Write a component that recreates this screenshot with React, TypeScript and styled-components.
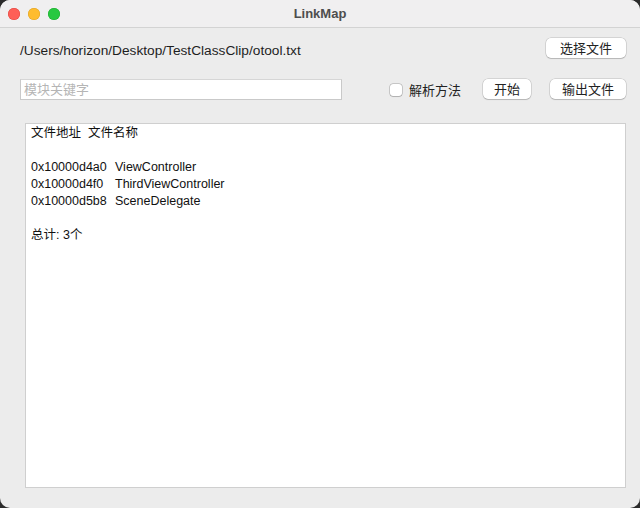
import React from "react";
import styled, { createGlobalStyle } from "styled-components";

const Global = createGlobalStyle`
  html, body { margin: 0; padding: 0; background: #2b2b2b; }
  body { font-family: "Liberation Sans", "Noto Sans CJK SC", sans-serif; }
  * { box-sizing: border-box; }
`;

const Window = styled.div`
  width: 640px;
  height: 508px;
  background: #ececec;
  border-radius: 10px;
  overflow: hidden;
  display: flex;
  flex-direction: column;
`;

const TitleBar = styled.div`
  height: 28px;
  flex: none;
  background: #f0eff0;
  border-bottom: 1px solid #d3d3d3;
  display: flex;
  align-items: center;
  position: relative;
  padding-left: 8px;
  gap: 8px;
`;

const Light = styled.span<{ $c: string; $b: string }>`
  width: 12px;
  height: 12px;
  border-radius: 50%;
  background: ${(p) => p.$c};
  box-shadow: inset 0 0 0 0.5px ${(p) => p.$b};
`;

const Title = styled.div`
  position: absolute;
  left: 0;
  right: 0;
  top: 0;
  bottom: 0;
  display: flex;
  align-items: center;
  justify-content: center;
  font-size: 13px;
  font-weight: bold;
  color: #4d4d4d;
  pointer-events: none;
`;

const Body = styled.div`
  flex: 1;
  display: flex;
  flex-direction: column;
  padding: 9px 14px 20px 20px;
`;

const Row = styled.div<{ $mt?: number }>`
  display: flex;
  align-items: center;
  margin-top: ${(p) => p.$mt ?? 0}px;
  & > * { flex: none; white-space: nowrap; }
`;

const PathText = styled.div`
  font-size: 13.7px;
  color: #1e1e1e;
  flex: 1 !important;
  padding-top: 6px;
`;

const Button = styled.button<{ $w: number; $ml?: string }>`
  width: ${(p) => p.$w}px;
  height: 20px;
  margin-left: ${(p) => p.$ml ?? "0"};
  border: none;
  border-radius: 5px;
  background: #fff;
  box-shadow: 0 0 0 0.5px rgba(0, 0, 0, 0.2), 0 1px 1px rgba(0, 0, 0, 0.14);
  font-family: "Liberation Sans", "Noto Sans CJK SC", sans-serif;
  font-size: 13px;
  color: #222;
  padding: 0;
  display: flex;
  align-items: center;
  justify-content: center;
`;

const Input = styled.input`
  width: 322px;
  height: 21px;
  border: 1px solid #c9c9c9;
  border-top-color: #d6d6d6;
  background: #fff;
  font-family: "Liberation Sans", "Noto Sans CJK SC", sans-serif;
  font-size: 13px;
  padding: 0 3px;
  outline: none;
  margin-top: 2px;
  &::placeholder { color: #b5b5b5; }
`;

const Check = styled.label`
  display: flex;
  align-items: center;
  gap: 7px;
  margin-left: 48px;
  font-size: 13px;
  color: #222;
  margin-top: 2px;
`;

const Box = styled.span`
  width: 12px;
  height: 12px;
  border-radius: 3px;
  background: #fff;
  box-shadow: 0 0 0 0.5px rgba(0, 0, 0, 0.3), 0 0.5px 1px rgba(0, 0, 0, 0.12);
`;

const Output = styled.div`
  margin-top: 23px;
  margin-left: 5px;
  flex: 1;
  background: #fff;
  border: 1px solid #cfcfcf;
  padding: 1px 5px 0;
  font-size: 12.5px;
  line-height: 17px;
  color: #111;
`;

const Header = styled.div`
  display: flex;
  gap: 7px;
  height: 17px;
`;

const Blank = styled.div`
  height: 17px;
`;

const Table = styled.div`
  display: grid;
  grid-template-columns: 84px auto;
  grid-auto-rows: 17px;
`;

const rows = [
  ["0x10000d4a0", "ViewController"],
  ["0x10000d4f0", "ThirdViewController"],
  ["0x10000d5b8", "SceneDelegate"],
];

export default function App() {
  return (
    <>
      <Global />
      <Window>
        <TitleBar>
          <Light $c="#fe5f57" $b="#e0443e" />
          <Light $c="#febc2e" $b="#dea123" />
          <Light $c="#28c840" $b="#1aab29" />
          <Title>LinkMap</Title>
        </TitleBar>
        <Body>
          <Row>
            <PathText>/Users/horizon/Desktop/TestClassClip/otool.txt</PathText>
            <Button $w={80}>选择文件</Button>
          </Row>
          <Row $mt={19}>
            <Input placeholder="模块关键字" />
            <Check>
              <Box />
              解析方法
            </Check>
            <Button $w={48} $ml="22px">开始</Button>
            <Button $w={76} $ml="auto">输出文件</Button>
          </Row>
          <Output>
            <Header>
              <span>文件地址</span>
              <span>文件名称</span>
            </Header>
            <Blank />
            <Table>
              {rows.map(([a, b]) => (
                <React.Fragment key={a}>
                  <span>{a}</span>
                  <span>{b}</span>
                </React.Fragment>
              ))}
            </Table>
            <Blank />
            <div>总计: 3个</div>
          </Output>
        </Body>
      </Window>
    </>
  );
}
